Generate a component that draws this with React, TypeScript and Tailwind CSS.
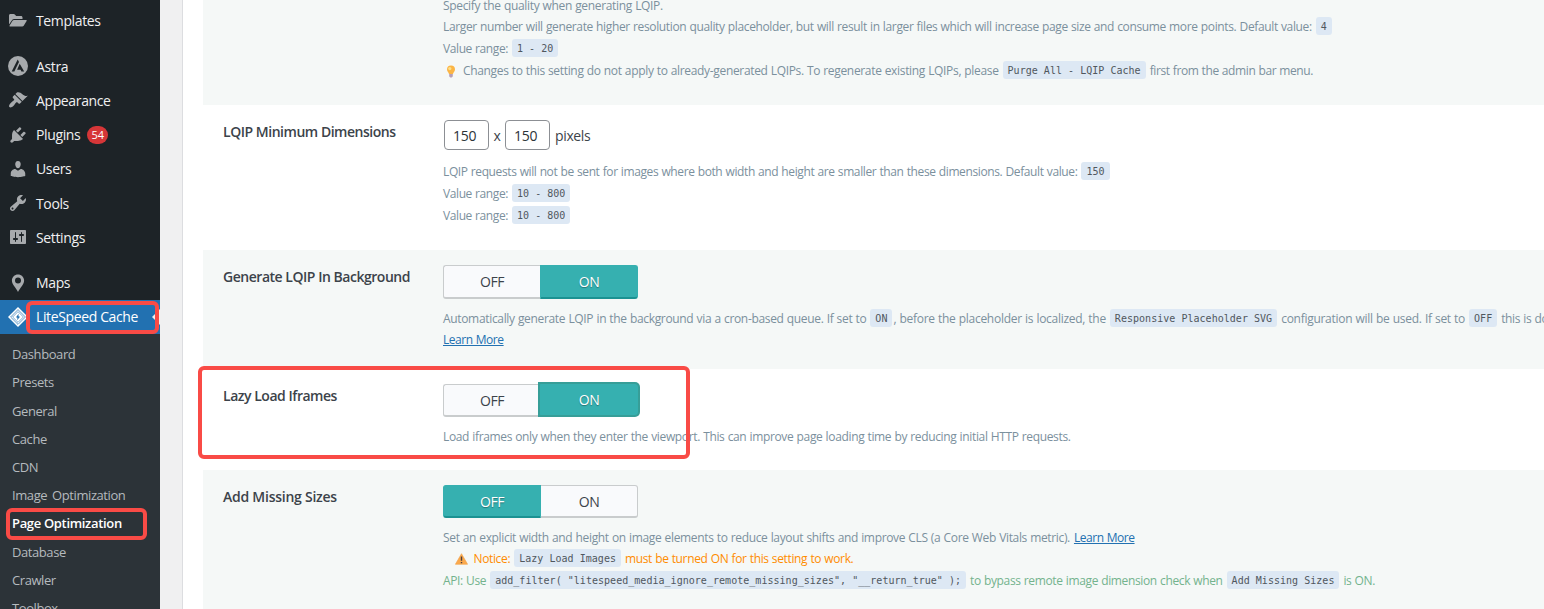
import React from 'react';
import clsx from 'clsx';

interface MenuItemProps {
  label: string;
  icon: React.ReactNode;
  badge?: string;
}

// 20x20 glyph used by most of the admin menu entries
const Glyph: React.FC<{ d: string }> = ({ d }) => (
  <svg width="20" height="20" viewBox="0 0 20 20" fill="currentColor" className="shrink-0">
    <path fillRule="evenodd" d={d} />
  </svg>
);

const FolderIcon = () => (
  <svg width="20" height="20" viewBox="0 0 20 20" fill="currentColor" className="shrink-0">
    <path d="M1 13.500V4.500C1 3.600 1.600 3 2.500 3h3.200c.5 0 .8.2 1.100.5L8.200 5h4.800c.9 0 1.500.6 1.500 1.500V8H6.200c-.9 0-1.600.4-2.100 1.100z" />
    <path d="M2.200 15.500c-.6 0-.9-.5-.6-1l2.900-4.700c.3-.5.9-.8 1.500-.8h12c.6 0 .9.500.6 1l-2.900 4.700c-.3.500-.9.800-1.500.8z" />
  </svg>
);

const AstraIcon = () => (
  <svg width="20" height="20" viewBox="0 0 20 20" className="shrink-0">
    <circle cx="10" cy="10" r="10" fill="#a7aaad" />
    <path d="M9.700 3.400 11 6.100 6.300 15.600H3.700z" fill="#1d2327" />
    <path d="M11.700 7.700 16.200 15.600H13.400L12.600 13.700H9.100z" fill="#1d2327" />
  </svg>
);

const LiteSpeedIcon = () => (
  <svg width="20" height="20" viewBox="0 0 20 20" className="shrink-0">
    <path d="M10 0 20 10 10 20 0 10z" fill="#fff" />
    <path d="M10 2.600 17.400 10 10 17.400 2.600 10z" fill="none" stroke="#2271b1" strokeWidth="0.700" />
    <path d="M10 4.600 15.400 10 10 15.400 4.600 10z" fill="none" stroke="#2271b1" strokeWidth="0.600" />
    <path d="M10.700 6.800 8 10.200l1.500.6-.4 2.500 2.900-3.500-1.600-.6z" fill="#2271b1" />
  </svg>
);

const BulbIcon = () => (
  <svg width="10" height="13" viewBox="0 0 10 13" className="mr-[7px] ml-[3px] inline-block align-[-3px]">
    <path d="M5 .5a4 4 0 0 0-4 4c0 1.900 1.500 2.700 2 4.500h4c.5-1.800 2-2.600 2-4.500a4 4 0 0 0-4-4z" fill="#fbb545" />
    <circle cx="3.800" cy="3.600" r="1.600" fill="#fde08a" />
    <path d="M3.200 9h3.600v2c0 .9-.8 1.500-1.800 1.500S3.200 11.900 3.200 11z" fill="#b79fb6" />
  </svg>
);

const WarningIcon = () => (
  <svg width="13" height="12" viewBox="0 0 13 12" className="mr-[6px] ml-[11.5px] inline-block align-[-2px]">
    <path d="M6.500.7 12.600 11.300H.4z" fill="#fba94c" stroke="#f2a045" strokeWidth="0.600" strokeLinejoin="round" />
    <path d="M6.500 3.600v4.200M6.500 8.900v1.400" stroke="#4a3f42" strokeWidth="1.400" />
  </svg>
);

const menu: MenuItemProps[] = [
  { label: 'Astra', icon: <AstraIcon /> },
  {
    label: 'Appearance',
    icon: <Glyph d="M14.48 11.06L7.41 3.99l1.5-1.5c.5-.56 2.3-.47 3.51.32 1.21.8 1.43 1.28 2.91 2.1 1.18.64 2.45 1.26 4.45.85zm-.71.71L6.7 4.7 4.93 6.47c-.39.39-.39 1.02 0 1.41l1.06 1.06c.39.39.39 1.03 0 1.42-.6.6-1.43 1.11-2.21 1.69-.35.26-.7.53-1.01.84C1.43 14.23.4 16.08 1.4 17.07c.99 1 2.84-.03 4.18-1.36.31-.31.58-.66.85-1.02.57-.78 1.08-1.61 1.69-2.21.39-.39 1.02-.39 1.41 0l1.06 1.06c.39.39 1.02.39 1.41 0z" />,
  },
  {
    label: 'Plugins',
    badge: '54',
    icon: <Glyph d="M13.11 4.36L9.87 7.6 8 5.73l3.24-3.24c.35-.34 1.05-.2 1.56.32.52.51.66 1.21.31 1.55zm-8 1.77l.91-1.12 9.01 9.01-1.19.84c-.71.71-2.63 1.16-3.82 1.16H6.14L4.9 17.26c-.59.59-1.54.59-2.12 0-.59-.58-.59-1.53 0-2.12l1.24-1.24v-3.88c0-1.13.4-3.19 1.09-3.89zm7.26 3.97l3.24-3.24c.34-.35 1.04-.21 1.55.31.52.51.66 1.21.31 1.55l-3.24 3.25z" />,
  },
  {
    label: 'Users',
    icon: <Glyph d="M10 9.25c-2.27 0-2.73-3.44-2.73-3.44C7 4.02 7.82 2 9.97 2c2.16 0 2.98 2.02 2.71 3.81 0 0-.41 3.44-2.68 3.44zm0 2.57L12.72 10c2.39 0 4.52 2.33 4.52 4.53v2.49s-3.65 1.13-7.24 1.13c-3.65 0-7.24-1.13-7.24-1.13v-2.49c0-2.25 1.94-4.48 4.47-4.48z" />,
  },
  {
    label: 'Tools',
    icon: <Glyph d="M16.68 9.77c-1.34 1.34-3.3 1.67-4.95.99l-5.41 6.52c-.99.99-2.59.99-3.58 0s-.99-2.59 0-3.57l6.52-5.42c-.68-1.65-.35-3.61.99-4.95 1.28-1.28 3.12-1.62 4.72-1.06l-2.89 2.89 2.82 2.82 2.86-2.87c.53 1.58.18 3.39-1.08 4.65zM3.81 16.21c.4.39 1.04.39 1.43 0 .4-.4.4-1.04 0-1.43-.39-.4-1.03-.4-1.43 0-.39.39-.39 1.03 0 1.43z" />,
  },
  {
    label: 'Settings',
    icon: <Glyph d="M18 16V4c0-.55-.45-1-1-1H3c-.55 0-1 .45-1 1v12c0 .55.45 1 1 1h14c.55 0 1-.45 1-1zM8 11h1c.55 0 1 .45 1 1s-.45 1-1 1H8v1.5c0 .28-.22.5-.5.5s-.5-.22-.5-.5V13H6c-.55 0-1-.45-1-1s.45-1 1-1h1V5.500c0-.28.22-.5.5-.5s.5.22.5.5V11zm5-2h-1c-.55 0-1-.45-1-1s.45-1 1-1h1V5.500c0-.28.22-.5.5-.5s.5.22.5.5V7h1c.55 0 1 .45 1 1s-.45 1-1 1h-1v5.500c0 .28-.22.5-.5.5s-.5-.22-.5-.5V9z" />,
  },
];

const submenu = [
  'Dashboard',
  'Presets',
  'General',
  'Cache',
  'CDN',
  'Image Optimization',
  'Page Optimization',
  'Database',
  'Crawler',
  'Toolbox',
];

const MenuItem: React.FC<MenuItemProps> = ({ label, icon, badge }) => (
  <li className="flex h-[34.2px] items-center gap-2 pl-2 text-[#a7aaad]">
    {icon}
    <span className="text-[14px] tracking-[-0.37px] text-[#f0f0f1]">{label}</span>
    {badge && (
      <span className="-ml-px flex h-[18px] w-[21px] items-center justify-center rounded-full bg-[#d63638] pt-px text-[11px] text-white">
        {badge}
      </span>
    )}
  </li>
);

const Sidebar = () => (
  <nav className="h-full w-40 shrink-0 overflow-hidden bg-[#1d2327] pt-[3.5px]">
    <ul>
      <MenuItem label="Templates" icon={<FolderIcon />} />
    </ul>
    <ul className="mt-[11.5px]">
      {menu.map((item) => (
        <MenuItem key={item.label} {...item} />
      ))}
    </ul>
    <ul className="mt-[11.4px]">
      <MenuItem
        label="Maps"
        icon={<Glyph d="M10 1.500C6.600 1.500 3.900 4.200 3.900 7.600c0 2 .9 3.500 2 5.200C7.300 14.900 9.200 17 10 19c.8-2 2.700-4.100 4.100-6.200 1.100-1.700 2-3.200 2-5.200 0-3.400-2.700-6.100-6.100-6.100zm0 3.100a3 3 0 1 1 0 6 3 3 0 0 1 0-6z" />}
      />
      <li className="flex h-[34px] items-center bg-[#2271b1] pl-2">
        <LiteSpeedIcon />
        <span className="ml-2 text-[14px] tracking-[-0.37px] text-white">LiteSpeed Cache</span>
        <span className="ml-auto h-0 w-0 border-y-8 border-r-8 border-y-transparent border-r-[#f0f0f1]" />
      </li>
    </ul>
    <ul className="bg-[#2c3338] pt-[7px]">
      {submenu.map((label) => (
        <li
          key={label}
          className={clsx(
            'flex h-[28.2px] items-center pl-3 text-[13px]',
            label === 'Page Optimization'
              ? 'font-semibold tracking-[-0.33px] text-white'
              : 'tracking-[-0.42px] text-[#b5babe] [word-spacing:2px]'
          )}
        >
          {label}
        </li>
      ))}
    </ul>
  </nav>
);

const Code: React.FC<{ children: React.ReactNode }> = ({ children }) => (
  <code className="inline-block h-[18px] rounded-[3px] bg-[#dde8f4] px-[5px] font-['DejaVu_Sans_Mono',monospace] text-[10px] leading-5 tracking-[0.03px] text-[#50575e] [word-spacing:0]">
    {children}
  </code>
);

const Line: React.FC<{ className?: string; children: React.ReactNode }> = ({ className = 'h-[22px]', children }) => (
  <div className={clsx('flex items-center gap-1 whitespace-pre [&>a]:pt-0.5 [&>span]:pt-0.5', className)}>
    {children}
  </div>
);

const ValueRange: React.FC<{ range: string }> = ({ range }) => (
  <Line>
    <span className="tracking-[-0.4px]">Value range:</span>
    <Code>{range}</Code>
  </Line>
);

const LearnMore = () => (
  <a href="#" className="tracking-[-0.45px] text-[#2271b1] underline">
    Learn More
  </a>
);

interface ToggleProps {
  value: 'OFF' | 'ON';
  focused?: boolean;
  className: string;
}

const Toggle: React.FC<ToggleProps> = ({ value, focused, className }) => (
  <div className={clsx('flex w-[195px] text-[14px] tracking-[-0.4px]', className)}>
    {(['OFF', 'ON'] as const).map((option) => {
      const active = option === value;
      return (
        <button
          key={option}
          className={clsx(
            'flex items-center justify-center border',
            active ? 'w-[98px]' : 'w-[97px] border-b-2 border-[#c9cccd] bg-[#f9fafc] text-[#3c434a]',
            option === 'OFF' ? 'rounded-l-[3px]' : 'rounded-r-[3px]',
            active && 'bg-[#36b0b0] text-white [text-shadow:0_1px_1px_#00000055]',
            active && !focused && 'border-b-2 border-[#36b0b0] border-b-[#1b9292]',
            active && focused && 'z-10 h-[31px] border-[#36b0b0] shadow-[0_0_0_2px_#379e98]',
            !active && (option === 'OFF' ? 'border-r-0' : 'border-l-0')
          )}
        >
          {option}
        </button>
      );
    })}
  </div>
);

interface RowProps {
  title?: string;
  titleClass?: string;
  className: string;
  children: React.ReactNode;
}

const Row: React.FC<RowProps> = ({ title, titleClass = 'tracking-[-0.47px]', className, children }) => (
  <section className={clsx('flex shrink-0 overflow-hidden pl-5', className)}>
    <h3 className={clsx('w-[220px] shrink-0 pt-[17px] text-[14px] leading-5 font-semibold text-[#3c434a]', titleClass)}>
      {title}
    </h3>
    <div className="min-w-0 flex-1 text-[12px] tracking-[-0.36px] text-[#7b909d] [word-spacing:0.4px]">{children}</div>
  </section>
);

const inputClass =
  'h-[30px] w-[45px] rounded-[4px] border border-[#8c8f94] bg-white pl-2 text-[14px] tracking-[-0.3px] text-[#2c3338]';

export default function App() {
  return (
    <div className="relative flex h-[609px] w-[1544px] overflow-hidden bg-[#f0f0f1] font-['Open_Sans',sans-serif]">
      <Sidebar />
      <main className="ml-[22px] flex min-w-0 flex-1 flex-col border-l border-[#dcdde0] bg-white pl-5">
        <Row className="h-[105px] bg-[#f5f8f7]">
          <Line className="-mt-[5px] h-5">
            <span className="tracking-[-0.33px]">Specify the quality when generating LQIP.</span>
          </Line>
          <Line>
            <span>Larger number will generate higher resolution quality placeholder, but will result in larger files which will increase page size and consume more points. Default value:</span>
            <Code>4</Code>
          </Line>
          <ValueRange range="1 - 20" />
          <Line>
            <span className="tracking-[-0.335px]">
              <BulbIcon />
              Changes to this setting do not apply to already-generated LQIPs. To regenerate existing LQIPs, please
            </span>
            <Code>Purge All - LQIP Cache</Code>
            <span className="tracking-[-0.4px]">first from the admin bar menu.</span>
          </Line>
        </Row>

        <Row title="LQIP Minimum Dimensions" className="h-[145px]">
          <div className="mt-[15px] mb-[10px] flex h-[30px] items-center pl-px text-[14px] text-[#3c434a]">
            <input className={inputClass} defaultValue="150" />
            <span className="w-4 text-center">x</span>
            <input className={inputClass} defaultValue="150" />
            <span className="ml-[5px]">pixels</span>
          </div>
          <Line>
            <span className="tracking-[-0.382px]">LQIP requests will not be sent for images where both width and height are smaller than these dimensions. Default value:</span>
            <Code>150</Code>
          </Line>
          <ValueRange range="10 - 800" />
          <ValueRange range="10 - 800" />
        </Row>

        <Row title="Generate LQIP In Background" className="h-[119px] bg-[#f5f8f7]">
          <Toggle value="ON" className="mt-[15px] mb-2 h-[34px]" />
          <Line>
            <span className="tracking-[-0.33px]">Automatically generate LQIP in the background via a cron-based queue. If set to</span>
            <Code>ON</Code>
            <span className="-ml-[3px] tracking-[-0.285px]">, before the placeholder is localized, the</span>
            <Code>Responsive Placeholder SVG</Code>
            <span className="tracking-[-0.28px]">configuration will be used. If set to</span>
            <Code>OFF</Code>
            <span>this is done</span>
          </Line>
          <Line className="h-5">
            <LearnMore />
          </Line>
        </Row>

        <Row title="Lazy Load Iframes" className="h-[101px]">
          <Toggle value="ON" focused className="mt-[15px] mb-2 h-[33px]" />
          <Line>
            <span className="tracking-[-0.35px]">Load iframes only when they enter the viewport. This can improve page loading time by reducing initial HTTP requests.</span>
          </Line>
        </Row>

        <Row title="Add Missing Sizes" titleClass="tracking-[-0.25px]" className="h-[139px] bg-[#f5f8f7]">
          <Toggle value="OFF" className="mt-[15px] mb-2 h-[33px]" />
          <Line className="h-[21px]">
            <span className="tracking-[-0.34px]">Set an explicit width and height on image elements to reduce layout shifts and improve CLS (a Core Web Vitals metric).</span>
            <LearnMore />
          </Line>
          <Line className="h-[22px] text-[#ff8c00]">
            <span>
              <WarningIcon />
              Notice:
            </span>
            <Code>Lazy Load Images</Code>
            <span>must be turned ON for this setting to work.</span>
          </Line>
          <Line className="h-[22px] text-[#73b38d]">
            <span>API: Use</span>
            <Code>add_filter( "litespeed_media_ignore_remote_missing_sizes", "__return_true" );</Code>
            <span>to bypass remote image dimension check when</span>
            <Code>Add Missing Sizes</Code>
            <span>is ON.</span>
          </Line>
        </Row>
      </main>

      {/* highlight boxes */}
      <div className="pointer-events-none absolute top-[301px] left-[26px] z-20 h-[33px] w-[133px] rounded-[6px] border-4 border-[#f94b46]" />
      <div className="pointer-events-none absolute top-[508px] left-[6px] z-20 h-8 w-[141px] rounded-[6px] border-4 border-[#f94b46]" />
      <div className="pointer-events-none absolute top-[366px] left-[198px] z-20 h-[93px] w-[492px] rounded-[6px] border-4 border-[#f94b46]" />
    </div>
  );
}
